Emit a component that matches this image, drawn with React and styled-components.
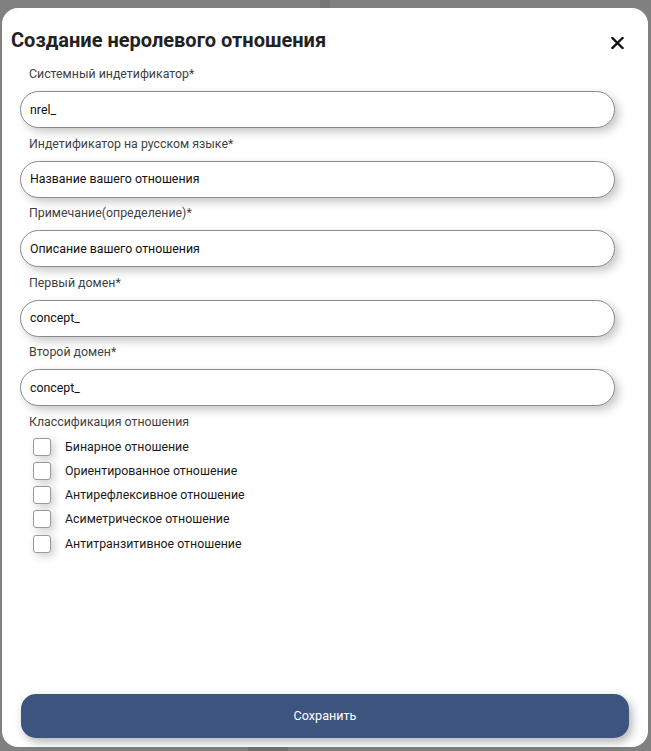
import React from "react";
import styled, { createGlobalStyle } from "styled-components";

const Global = createGlobalStyle`
  html, body { margin: 0; padding: 0; background: #808080; }
  body { font-family: Roboto, "Liberation Sans", Arial, sans-serif; }
  * { box-sizing: border-box; }
`;

const Backdrop = styled.div`
  width: 651px;
  height: 751px;
  padding: 8px 3px 4px 2px;
  background: #808080;
  position: relative;
`;

const Ghost = styled.div`
  position: absolute;
  left: ${(p) => p.x}px;
  top: ${(p) => p.y}px;
  width: ${(p) => p.w}px;
  height: ${(p) => p.h}px;
  background: ${(p) => p.c};
`;

const Modal = styled.div`
  position: relative;
  width: 646px;
  height: 739px;
  background: #fff;
  border-radius: 16px;
  display: flex;
  flex-direction: column;
  padding: 18px 19px 9px 9px;
`;

const Header = styled.div`
  display: flex;
  align-items: center;
  justify-content: space-between;
  height: 28px;
`;

const Title = styled.h2`
  margin: 0;
  font-family: Roboto, "Liberation Sans", Arial, sans-serif;
  font-size: 20px;
  font-weight: 700;
  color: #222;
  line-height: 28px;
`;

const CloseButton = styled.button`
  width: 20px;
  height: 20px;
  border: none;
  background: none;
  padding: 0;
  display: flex;
  align-items: center;
  justify-content: center;
  margin-right: 2px;
  margin-top: 5px;
  cursor: pointer;
`;

const Form = styled.div`
  display: flex;
  flex-direction: column;
  padding-left: 9px;
  margin-top: 13px;
  flex: 1;
`;

const Field = styled.div`
  display: flex;
  flex-direction: column;
  margin-bottom: 8.5px;
`;

const Label = styled.label`
  font-size: 12.35px;
  line-height: 15px;
  color: #3f3f3f;
  padding-left: 9px;
  margin-bottom: 9px;
`;

const Input = styled.input`
  width: 595px;
  height: 37px;
  border: 1px solid #8a8a8a;
  border-radius: 19px;
  padding: 0 9px;
  font-family: Roboto, "Liberation Sans", Arial, sans-serif;
  font-size: 12.35px;
  color: #111;
  background: #fff;
  box-shadow: 4px 4px 10px rgba(0, 0, 0, 0.22);
  outline: none;
`;

const CheckList = styled.div`
  display: flex;
  flex-direction: column;
  gap: 6.25px;
  padding-left: 13px;
  margin-top: -1px;
`;

const CheckRow = styled.label`
  display: flex;
  align-items: center;
  gap: 14px;
  height: 18px;
  font-size: 12.35px;
  color: #1a1a1a;
`;

const Box = styled.span`
  width: 18px;
  height: 18px;
  border: 1px solid #9a9a9a;
  border-radius: 3px;
  background: #fff;
  box-shadow: 3px 3px 8px rgba(0, 0, 0, 0.2);
  flex: none;
`;

const SaveButton = styled.button`
  margin-left: 10px;
  width: 608px;
  height: 44px;
  border: none;
  border-radius: 15px;
  background: #3d557e;
  color: #fff;
  font-family: Roboto, "Liberation Sans", Arial, sans-serif;
  font-size: 12.6px;
  padding-bottom: 2px;
  box-shadow: 3px 4px 10px rgba(0, 0, 0, 0.3);
  cursor: pointer;
`;

const fields = [
  { label: "Системный индетификатор*", value: "nrel_" },
  { label: "Индетификатор на русском языке*", value: "Название вашего отношения" },
  { label: "Примечание(определение)*", value: "Описание вашего отношения" },
  { label: "Первый домен*", value: "concept_" },
  { label: "Второй домен*", value: "concept_" },
];

const checks = [
  "Бинарное отношение",
  "Ориентированное отношение",
  "Антирефлексивное отношение",
  "Асиметрическое отношение",
  "Антитранзитивное отношение",
];

export default function App() {
  return (
    <>
      <Global />
      <Backdrop>
        <Ghost x={320} y={0} w={10} h={8} c="#767676" />
        <Ghost x={248} y={747} w={40} h={4} c="#707070" />
        <Modal>
          <Header>
            <Title>Создание неролевого отношения</Title>
            <CloseButton aria-label="close">
              <svg width="13" height="12" viewBox="0 0 13 12">
                <path d="M1.5 1 L11.5 11 M11.5 1 L1.5 11" stroke="#111" strokeWidth="2.3" strokeLinecap="square" />
              </svg>
            </CloseButton>
          </Header>
          <Form>
            {fields.map((f) => (
              <Field key={f.label}>
                <Label>{f.label}</Label>
                <Input defaultValue={f.value} />
              </Field>
            ))}
            <Field>
              <Label>Классификация отношения</Label>
              <CheckList>
                {checks.map((c) => (
                  <CheckRow key={c}>
                    <Box />
                    {c}
                  </CheckRow>
                ))}
              </CheckList>
            </Field>
          </Form>
          <SaveButton>Сохранить</SaveButton>
        </Modal>
      </Backdrop>
    </>
  );
}
